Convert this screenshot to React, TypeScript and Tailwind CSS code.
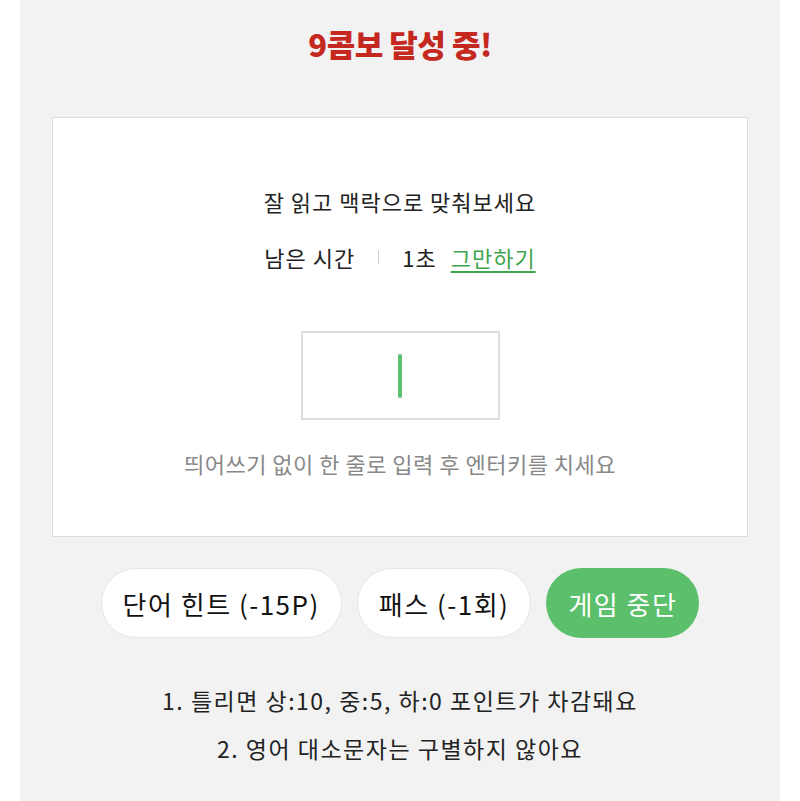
import React from "react";

const font = { fontFamily: '"Noto Sans CJK KR", "Noto Sans", sans-serif' };

export default function App() {
  const [value, setValue] = React.useState("");

  return (
    <div className="min-h-[801px] w-[800px] bg-white" style={font}>
      <div className="mx-[20px] min-h-[801px] bg-[#f2f2f2] pt-[22px]">
        {/* 콤보 타이틀 */}
        <h1 className="text-center text-[31px] leading-[44px] font-extrabold tracking-[-0.5px] text-[#c4281f]">
          9콤보 달성 중!
        </h1>

        {/* 문제 카드 */}
        <div className="mx-[32px] mt-[51px] flex flex-col items-center border border-[#dddddd] bg-white pt-[68px] pb-[58px]">
          <p className="text-[22px] leading-[30px] tracking-[1px] text-[#222222]">잘 읽고 맥락으로 맞춰보세요</p>
          <div className="mt-[26px] flex items-center text-[22px] leading-[30px] tracking-[1px] text-[#222222]">
            <span>남은 시간</span>
            <span className="mx-[23px] h-[14px] w-px bg-[#cccccc]" />
            <span>1초</span>
            <a href="#" className="ml-[14px] text-[#3fa64f] underline underline-offset-4">
              그만하기
            </a>
          </div>
          <div className="relative mt-[59px] flex h-[89px] w-[199px] items-center justify-center border-2 border-[#dddddd]">
            <input
              value={value}
              onChange={(e) => setValue(e.target.value)}
              className="absolute inset-0 bg-transparent text-center text-[24px] outline-none"
            />
            {value === "" && <span className="h-[44px] w-[4px] rounded-full bg-[#5cbf6b]" />}
          </div>
          <p className="mt-[28px] text-[22px] leading-[30px] tracking-[0.5px] text-[#888888]">
            띄어쓰기 없이 한 줄로 입력 후 엔터키를 치세요
          </p>
        </div>

        {/* 버튼 */}
        <div className="mt-[31px] flex justify-center gap-[15px]">
          <button className="h-[70px] rounded-full border border-[#e6e6e6] bg-white px-[21px] text-[26px] tracking-[1.5px] text-[#111111]">
            단어 힌트 (-15P)
          </button>
          <button className="h-[70px] rounded-full border border-[#e6e6e6] bg-white px-[21px] text-[26px] tracking-[1.5px] text-[#111111]">
            패스 (-1회)
          </button>
          <button className="h-[70px] rounded-full bg-[#5cbf6b] px-[22px] text-[26px] tracking-[1.5px] text-white">
            게임 중단
          </button>
        </div>

        {/* 안내 */}
        <div className="mt-[46px] text-center text-[23px] leading-[32px] tracking-[1.5px] text-[#222222]">
          <p>1. 틀리면 상:10, 중:5, 하:0 포인트가 차감돼요</p>
          <p className="mt-[16px]">2. 영어 대소문자는 구별하지 않아요</p>
        </div>
      </div>
    </div>
  );
}
